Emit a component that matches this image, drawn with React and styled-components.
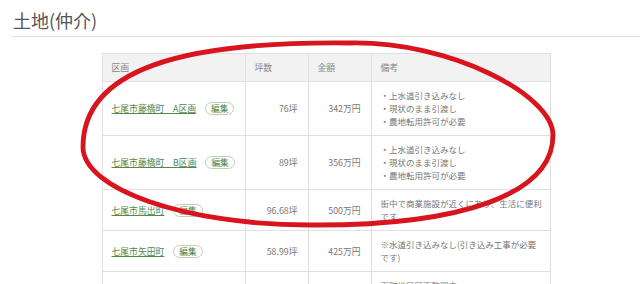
import styled, { createGlobalStyle } from 'styled-components';

const rows = [
    {
        name: '七尾市藤橋町　A区画',
        area: '76坪',
        price: '342万円',
        notes: ['・上水道引き込みなし', '・現状のまま引渡し', '・農地転用許可が必要'],
    },
    {
        name: '七尾市藤橋町　B区画',
        area: '89坪',
        price: '356万円',
        notes: ['・上水道引き込みなし', '・現状のまま引渡し', '・農地転用許可が必要'],
    },
    {
        name: '七尾市馬出町',
        area: '96.68坪',
        price: '500万円',
        notes: ['街中で商業施設が近くにあり、生活に便利です'],
    },
    {
        name: '七尾市矢田町',
        area: '58.99坪',
        price: '425万円',
        notes: ['※水道引き込みなし(引き込み工事が必要です)'],
    },
    {
        name: '',
        area: '',
        price: '',
        notes: ['下町地区区画整理中'],
    },
];

const GlobalStyle = createGlobalStyle`
    html, body {
        margin: 0;
        padding: 0;
        background: #fff;
        overflow: hidden;
    }
    body {
        font-family: "Noto Sans CJK JP", "Noto Sans", sans-serif;
    }
`;

const Page = styled.div`
    position: relative;
    width: 640px;
    height: 284px;
    padding-left: 12px;
    box-sizing: border-box;
    overflow: hidden;
`;

const Heading = styled.h2`
    margin: 0;
    padding: 9px 0 4px 1px;
    font-size: 18px;
    line-height: 23px;
    font-weight: 400;
    color: #555;
    border-bottom: 1px solid #dcdcdc;
`;

const Table = styled.table`
    width: 448px;
    margin: 16px auto 0;
    border-collapse: collapse;
    table-layout: fixed;
    font-size: 8.8px;
    line-height: 13px;
    color: #777;
`;

const Th = styled.th`
    box-sizing: border-box;
    width: ${({ $w }) => $w}px;
    padding: 7px 9px;
    background: #f2f2f2;
    border: 1px solid #e0e0e0;
    font-weight: 400;
    color: #888;
    text-align: left;
`;

const Td = styled.td`
    padding: 7px ${({ $right }) => ($right ? 10 : 5)}px 7px 9px;
    border: 1px solid #e0e0e0;
    vertical-align: middle;
    text-align: ${({ $right }) => ($right ? 'right' : 'left')};
    white-space: ${({ $right }) => ($right ? 'nowrap' : 'normal')};
`;

const NameLink = styled.a`
    color: #55894a;
    text-decoration: underline;
    text-underline-offset: 1px;
    cursor: pointer;
`;

const EditBadge = styled.span`
    display: inline-block;
    margin-left: 9px;
    padding: 0 5px;
    height: 11px;
    line-height: 11px;
    border: 1px solid #bcd3b2;
    border-radius: 7px;
    color: #4f7f43;
    font-size: 8.6px;
    vertical-align: 0;
`;

const Note = styled.div`
    font-size: 8.5px;
`;

const Overlay = styled.svg`
    position: absolute;
    left: 0;
    top: 0;
    pointer-events: none;
`;

const App = () => (
    <Page>
        <GlobalStyle />
        <Heading>土地(仲介)</Heading>
        <Table>
            <thead>
                <tr>
                    <Th $w={143}>区画</Th>
                    <Th $w={63}>坪数</Th>
                    <Th $w={63}>金額</Th>
                    <Th $w={179}>備考</Th>
                </tr>
            </thead>
            <tbody>
                {rows.map((row, i) => (
                    <tr key={i}>
                        <Td>
                            {row.name && (
                                <>
                                    <NameLink>{row.name}</NameLink>
                                    <EditBadge>編集</EditBadge>
                                </>
                            )}
                        </Td>
                        <Td $right>{row.area}</Td>
                        <Td $right>{row.price}</Td>
                        <Td>
                            {row.notes.map(note => (
                                <Note key={note}>{note}</Note>
                            ))}
                        </Td>
                    </tr>
                ))}
            </tbody>
        </Table>

        {/* hand drawn red circle over the first two rows */}
        <Overlay width="640" height="284" viewBox="0 0 640 284">
            <path
                d="M350 43 C450 41 553 95 553 135 C553 195 460 226 310 225 C185 225 83 189 83 147 C83 70 180 41 350 43 Z"
                fill="none"
                stroke="#d8151f"
                strokeWidth="4.8"
                strokeLinecap="round"
            />
        </Overlay>
    </Page>
);

export default App;
